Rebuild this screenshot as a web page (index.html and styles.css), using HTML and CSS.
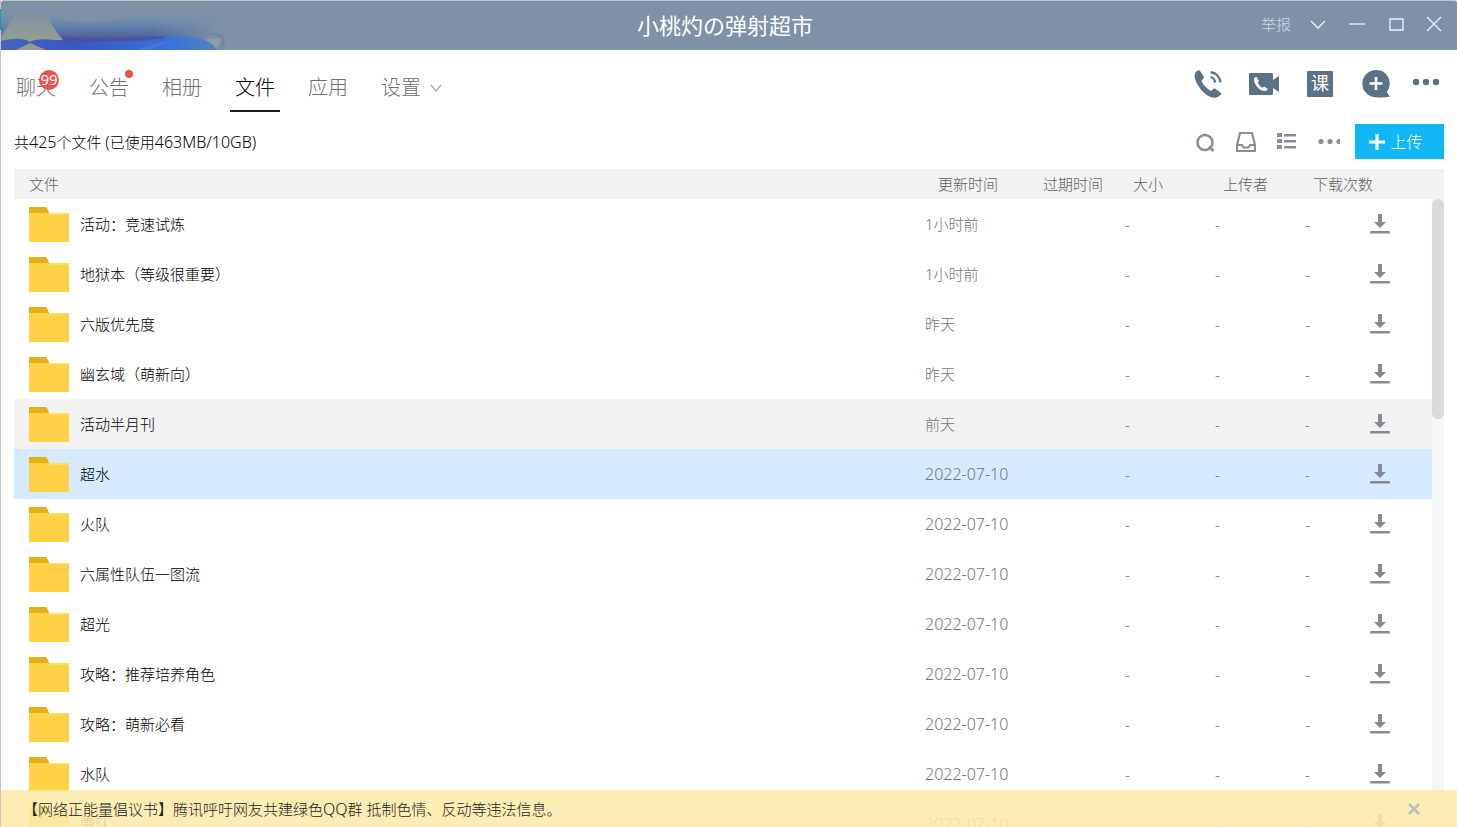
FILE: index.html
```html
<!DOCTYPE html>
<html lang="zh-CN">
<head>
<meta charset="utf-8">
<meta name="viewport" content="width=device-width, initial-scale=1">
<title>小桃灼の弹射超市</title>
<link rel="stylesheet" href="styles.css">
</head>
<body>
<svg class="defs" aria-hidden="true">
  <symbol id="folder" viewBox="0 0 40 36">
    <path d="M0 1h16q1.500 0 2.200 1.400L20.500 8H0z" fill="#e6b012"/>
    <path d="M0 7h40v29H0z" fill="#ffd147"/>
    <path d="M20 7h20v2H20z" fill="#ffdf57"/>
  </symbol>
  <symbol id="download" viewBox="0 0 20 20">
    <path d="M8 0h4v8h4l-6 6-6-6h4zM1 17h18a1 1 0 0 1 0 2.400H1A1 1 0 0 1 1 17z" fill="currentColor"/>
  </symbol>
</svg>
<div class="window">
  <header class="titlebar">
    <svg class="art" viewBox="0 0 240 49" aria-hidden="true">
      <defs>
        <linearGradient id="haze" x1="0" y1="12" x2="0" y2="40" gradientUnits="userSpaceOnUse">
          <stop offset="0" stop-color="#7e91a5"/><stop offset=".25" stop-color="#6f8fae"/><stop offset=".6" stop-color="#5b77a8"/><stop offset="1" stop-color="#4a559a"/>
        </linearGradient>
        <linearGradient id="wave" x1="0" x2="1">
          <stop offset="0" stop-color="#4563bc"/><stop offset=".35" stop-color="#3857c6"/><stop offset=".8" stop-color="#3a74da"/><stop offset="1" stop-color="#5483bd"/>
        </linearGradient>
        <linearGradient id="sand" x1="0" y1="0" x2="0" y2="1">
          <stop offset="0" stop-color="#87968f" stop-opacity="0"/><stop offset=".5" stop-color="#8a999a"/><stop offset="1" stop-color="#939f90"/>
        </linearGradient>
        <linearGradient id="fade" x1="150" x2="222" y1="0" y2="0" gradientUnits="userSpaceOnUse">
          <stop offset="0" stop-color="#7e91a5" stop-opacity="0"/><stop offset="1" stop-color="#7e91a5"/>
        </linearGradient>
        <filter id="soft" x="-10%" y="-30%" width="120%" height="160%"><feGaussianBlur stdDeviation="1"/></filter>
      </defs>
      <path d="M-4 12h19L-4 40zM46 12q28 14 65 7t70-5h45L204 35v16H46z" fill="url(#haze)" filter="url(#soft)"/>
      <path d="M140 8h100v41H140z" fill="url(#fade)"/>
      <path d="M0 39L16 10h30q4 16 16 29l-32 1z" fill="url(#sand)"/>
      <path d="M0 40q20-5 29 1 8-5 33-1 50 1 90-3 35-4 52 2 9 4 12 10H0z" fill="url(#wave)"/>
      <path d="M62 38q60 3 100-2" fill="none" stroke="#4a509c" stroke-width="3" filter="url(#soft)"/>
      <path d="M15 49l14-7 16 7z" fill="#919e91"/>
      <path d="M136 49q22-8 40-10-16 5-26 10z" fill="#4b84df" opacity=".5"/>
      <path d="M202 35q14-5 20 2 2 6-4 12" fill="none" stroke="#7089a8" stroke-width="3"/>
      <path d="M205 39q6-3 14-1 0 5-4 9-4-5-10-8z" fill="#8ca0a2"/>
    </svg>
    <h1 class="title">小桃灼の弹射超市</h1>
    <div class="controls">
      <a class="report" href="#">举报</a>
      <button aria-label="更多选项"><svg width="16" height="16" viewBox="0 0 16 16"><path d="M1 5l7 7 7-7"/></svg></button>
      <button aria-label="最小化"><svg width="16" height="16" viewBox="0 0 16 16"><path d="M0 8h16"/></svg></button>
      <button aria-label="最大化"><svg width="16" height="16" viewBox="0 0 16 16"><path d="M2 3h13v11H2z"/></svg></button>
      <button aria-label="关闭"><svg width="16" height="16" viewBox="0 0 16 16"><path d="M1 1l14 14M15 1L1 15"/></svg></button>
    </div>
  </header>

  <div class="navbar">
    <nav class="tabs">
      <a href="#">聊天<span class="badge">99</span></a>
      <a href="#">公告<span class="dot"></span></a>
      <a href="#">相册</a>
      <a class="active" href="#" aria-current="page">文件</a>
      <a href="#">应用</a>
      <a href="#">设置<svg class="chevron" width="12" height="8" viewBox="0 0 12 8"><path d="M1 1l5 6 5-6" fill="none" stroke="#aaa" stroke-width="1.300"/></svg></a>
    </nav>
    <div class="calls">
      <button aria-label="语音通话"><svg width="28" height="28" viewBox="0 0 28 28"><path d="M4 .5C1 2 0 5 1 8.500c2 8 9 15.500 15.500 18.500 4 1.500 8 .5 10.500-2.500.5-.7.300-1.300-.3-1.700l-5.500-4c-.7-.5-1.400-.4-2 .1l-2.200 2C13 19 9 14.500 7.500 11l2-2.500c.5-.6.5-1.200.2-1.900L6.300 1.200C5.800.3 5 .1 4 .5z" fill="currentColor"/><path d="M16.500 7q4 1 4.700 5.500M16.500 2.200q8.500 1 10 10.300" fill="none" stroke="currentColor" stroke-width="2.200"/></svg></button>
      <button aria-label="视频通话"><svg width="30" height="22" viewBox="0 0 30 22"><path d="M1 0h22a1 1 0 0 1 1 1v6l6-4v16l-6-4v6a1 1 0 0 1-1 1H1a1 1 0 0 1-1-1V1a1 1 0 0 1 1-1z" fill="currentColor"/><path d="M6.500 4C4.500 5 4.800 8 6 10.500c2 4.500 6 7.500 9.500 7.500 2 0 3-1 3.300-2l-3.600-2.400-2 1.200c-2-1-3.700-3-4.500-5.200L10 8 7.700 4.200z" fill="#fff"/></svg></button>
      <button aria-label="群课堂"><span class="lesson">课</span></button>
      <button aria-label="添加"><svg width="28" height="28" viewBox="0 0 28 28"><path d="M14 0a13.500 13.500 0 0 1 11 21.500q.5 3 3 5-5 1.500-14 .8A13.600 13.600 0 0 1 14 0z" fill="currentColor"/><path d="M14 7v13M7.500 13.500h13" stroke="#fff" stroke-width="2.600"/></svg></button>
      <button class="more" aria-label="更多"><svg width="28" height="12" viewBox="0 0 28 12"><g fill="currentColor"><circle cx="4" cy="4" r="3.200"/><circle cx="14" cy="4" r="3.200"/><circle cx="24" cy="4" r="3.200"/></g></svg></button>
    </div>
  </div>

  <div class="toolbar">
    <p class="usage">共<span class="num">425</span>个文件 <span class="num">(</span>已使用<span class="num">463MB/10GB)</span></p>
    <div class="tools">
      <button aria-label="搜索"><svg width="20" height="20" viewBox="0 0 20 20" fill="none" stroke="currentColor" stroke-width="2.500"><circle cx="10" cy="10.500" r="7.500"/><path d="M14 14.500l4.500 4.500"/></svg></button>
      <button aria-label="收件箱"><svg width="20" height="20" viewBox="0 0 20 20" fill="none" stroke="currentColor" stroke-width="2.200"><path d="M4 1h12l3 12v6H1v-6zM1 13h5l1.500 2.500h5L14 13h5" stroke-linejoin="round"/></svg></button>
      <button aria-label="列表视图"><svg width="20" height="20" viewBox="0 0 20 20"><path d="M0 1h5v4H0zM0 7h5v4H0zM0 13h5v4H0zM7 2h12v2.400H7zM7 8h12v2.400H7zM7 14h12v2.400H7z" fill="currentColor"/></svg></button>
      <button aria-label="更多操作"><svg width="24" height="20" viewBox="0 0 24 20"><g fill="currentColor"><circle cx="5" cy="9.500" r="2.600"/><circle cx="14" cy="9.500" r="2.600"/><circle cx="23" cy="9.500" r="2.600"/></g></svg></button>
    </div>
    <button class="upload"><svg width="16" height="16" viewBox="0 0 16 16"><path d="M8 0v16M0 8h16" stroke="#fff" stroke-width="3"/></svg>上传</button>
  </div>

  <main class="files">
    <table>
      <colgroup><col><col class="c-updated"><col class="c-expires"><col class="c-num"><col class="c-num"><col class="c-count"><col class="c-action"></colgroup>
      <thead>
        <tr><th class="name">文件</th><th>更新时间</th><th>过期时间</th><th>大小</th><th>上传者</th><th colspan="2">下载次数</th></tr>
      </thead>
      <tbody id="rows"></tbody>
    </table>
    <div class="scroll"><div class="thumb"></div></div>
  </main>

  <aside class="notice">
    <p>【网络正能量倡议书】腾讯呼吁网友共建绿色<span class="num">QQ</span>群 抵制色情、反动等违法信息。</p>
    <button aria-label="关闭提示"><svg width="12" height="12" viewBox="0 0 12 12"><path d="M1 1l10 10M11 1L1 11" stroke="#bdbdc0" stroke-width="2.600"/></svg></button>
  </aside>
</div>
<script src="files.js"></script>
</body>
</html>
```
FILE: styles.css
```css
* { box-sizing: border-box; }

body {
  margin: 0;
  font: 15px/20px "Noto Sans", "Noto Sans CJK SC", sans-serif;
  font-weight: 300;
  color: #1a1a1a;
}

h1, p { margin: 0; font-weight: inherit; }
a { color: inherit; text-decoration: none; }

button {
  display: flex;
  align-items: center;
  justify-content: center;
  padding: 0;
  border: 0;
  background: none;
  color: inherit;
  font: inherit;
}

.defs { position: absolute; width: 0; height: 0; }
.num { font-size: 16px; }

.window {
  position: relative;
  display: flex;
  flex-direction: column;
  height: 100vh;
  overflow: hidden;
  padding-left: 1px;
  background: linear-gradient(#c6c6c6 9px, #11a3a3 9px 30px, #c6c6c6 30px) left / 1px 100% no-repeat #fff;
}

.titlebar {
  display: grid;
  grid-template-columns: 1fr auto 1fr;
  align-items: center;
  flex: none;
  height: 50px;
  padding-right: 8px;
  border-top: 1px solid #c3c3c3;
  border-radius: 3px 3px 0 0;
  background: #7e91a5;
  color: #fff;
}

.art { width: 240px; height: 49px; }
.title { font-size: 22px; font-weight: 400; line-height: 32px; padding-bottom: 2px; }

.controls {
  display: flex;
  align-items: center;
  justify-content: flex-end;
  padding-bottom: 4px;
}

.controls button { width: 39px; height: 32px; }
.controls button:last-child { width: 30px; margin-left: 4px; }
.controls svg { fill: none; stroke: #f0f3f6; stroke-width: 1.3; }
.report { margin-right: 7px; color: #d3dae2; }

.navbar {
  display: flex;
  justify-content: space-between;
  flex: none;
  height: 62px;
  padding: 0 17px 0 10px;
}

.tabs { display: flex; gap: 22px; font-size: 20px; line-height: 28px; color: #707070; }

.tabs a {
  position: relative;
  display: flex;
  align-items: center;
  padding: 15px 5px 0;
  border-bottom: 2px solid transparent;
  white-space: nowrap;
}

.tabs .active { color: #000; border-color: #1a1a1a; }
.tabs a + a { margin-left: 1px; }
.chevron { margin-left: 9px; }

.badge {
  position: absolute;
  top: 20px;
  left: 28px;
  width: 20px;
  height: 20px;
  border-radius: 10px;
  background: #e6544b;
  color: #fff;
  font-size: 15px;
  font-weight: 400;
  line-height: 18px;
  text-align: center;
}

.dot {
  position: absolute;
  top: 20px;
  right: 1px;
  width: 8px;
  height: 8px;
  border-radius: 4px;
  background: #e6544b;
}

.calls { display: flex; align-items: center; gap: 16px; padding-top: 6px; color: #5b7186; }
.calls button { width: 40px; height: 32px; }
.calls .more { width: 28px; }

.lesson {
  width: 26px;
  height: 26px;
  border-radius: 1px;
  background: #5b7186;
  color: #fff;
  font-size: 18px;
  font-weight: 400;
  line-height: 24px;
}

.toolbar {
  display: flex;
  align-items: center;
  flex: none;
  padding: 12px 13px 10px;
}

.usage { flex: 1; color: #000; }
.tools { display: flex; gap: 11px; margin-right: 12px; color: #8a8d96; }
.tools button { width: 30px; height: 30px; }

.upload {
  gap: 5px;
  width: 89px;
  height: 35px;
  padding-right: 7px;
  background: #12b7f5;
  color: #fff;
  font-size: 16px;
}

.files {
  display: flex;
  flex: 1;
  min-height: 0;
  overflow: hidden;
  margin: 0 13px;
}

table {
  flex: 1;
  align-self: flex-start;
  table-layout: fixed;
  border-collapse: collapse;
}

th { height: 30px; padding: 0 0 0 13px; background: #f2f2f2; color: #626262; font-weight: inherit; text-align: left; }
th.name { padding-left: 15px; }
td { height: 50px; padding: 0 0 0 5px; color: #72747c; }
td.name { padding-left: 15px; color: #000; }
td.time { padding-left: 0; }
td.date { font-size: 16px; }
td.action { padding-left: 0; color: #888a93; }

.c-updated { width: 105px; }
.c-expires { width: 90px; }
.c-num { width: 90px; }
.c-count { width: 70px; }
.c-action { width: 62px; }

.file { display: flex; align-items: center; gap: 11px; }
.folder { width: 40px; height: 36px; }
.download { width: 20px; height: 20px; }
.hover { background: #f2f2f2; }
.selected { background: #d5e9ff; }

.scroll { width: 12px; border-top: 30px solid #f2f2f2; background: #f5f6f8; }
.thumb { height: 220px; border-radius: 6px; background: #dbd9da; }

.notice {
  position: absolute;
  right: 0;
  bottom: 0;
  left: 1px;
  display: flex;
  align-items: center;
  justify-content: space-between;
  height: 37px;
  padding: 0 33px 0 22px;
  background: rgba(250, 235, 170, 0.88);
  color: #222;
}

.notice button { width: 20px; height: 20px; }
```
FILE: files.js
```js
const files = [
  ["活动：竞速试炼", "1小时前"],
  ["地狱本（等级很重要）", "1小时前"],
  ["六版优先度", "昨天"],
  ["幽玄域（萌新向）", "昨天"],
  ["活动半月刊", "前天", "hover"],
  ["超水", "2022-07-10", "selected"],
  ["火队", "2022-07-10"],
  ["六属性队伍一图流", "2022-07-10"],
  ["超光", "2022-07-10"],
  ["攻略：推荐培养角色", "2022-07-10"],
  ["攻略：萌新必看", "2022-07-10"],
  ["水队", "2022-07-10"],
  ["雷队", "2022-07-10"]
];

document.getElementById("rows").innerHTML = files.map(([name, time, state = ""]) => `
  <tr class="${state}">
    <td class="name"><div class="file"><svg class="folder"><use href="#folder"/></svg>${name}</div></td>
    <td class="time ${time.startsWith("2022") ? "date" : ""}">${time}</td>
    <td></td><td>-</td><td>-</td><td>-</td>
    <td class="action"><button aria-label="下载 ${name}"><svg class="download"><use href="#download"/></svg></button></td>
  </tr>`).join("");
```
